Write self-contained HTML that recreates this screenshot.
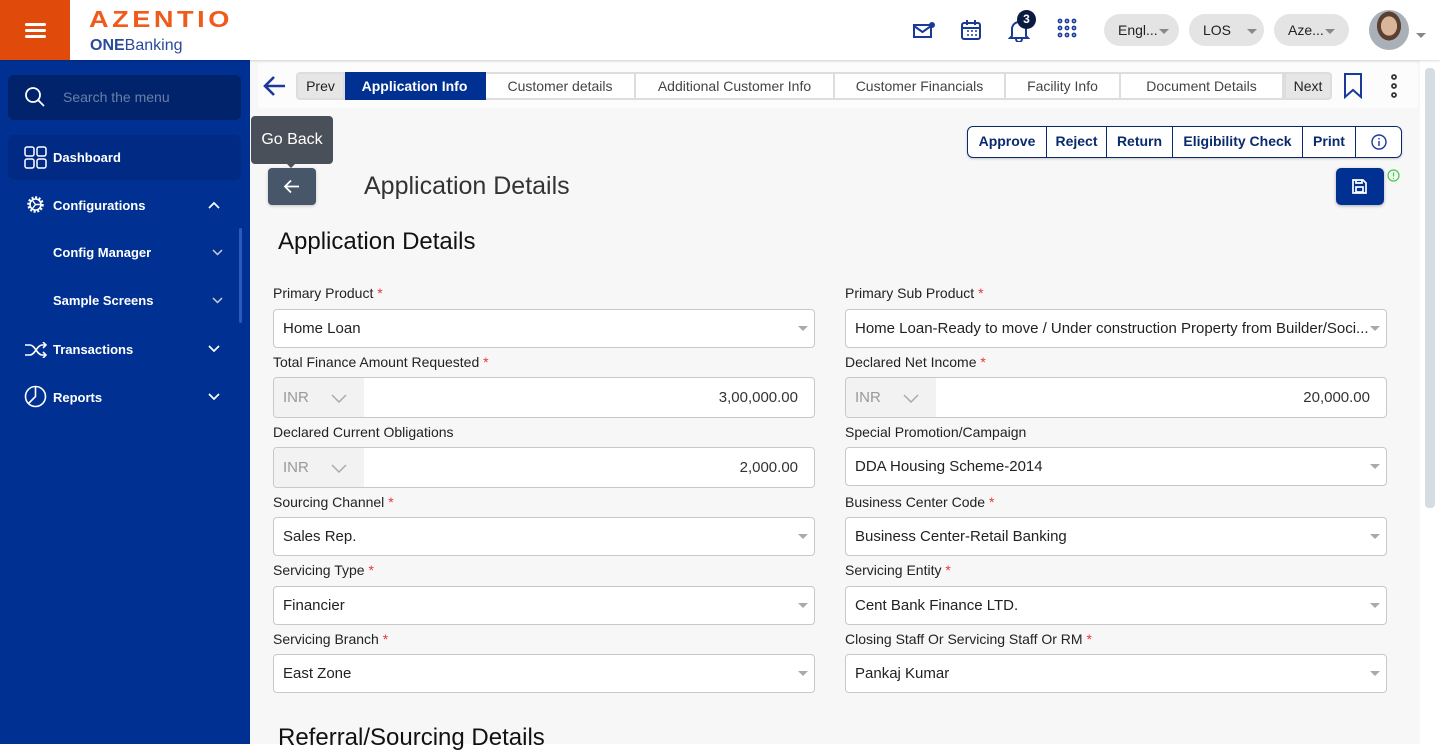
<!DOCTYPE html>
<html><head><meta charset="utf-8"><style>
*{box-sizing:border-box;margin:0;padding:0}
body{width:1440px;height:744px;overflow:hidden;font-family:"Liberation Sans",Arial,sans-serif;background:#fff;position:relative}
.a{position:absolute}
.hdr{left:0;top:0;width:1440px;height:60px;background:#fff;box-shadow:0 1px 2px rgba(0,0,0,.15);z-index:2}
.side{left:0;top:60px;width:250px;height:684px;background:#003192;color:#fff}
.main{left:250px;top:60px;width:1170px;height:684px;background:#f7f7f7}
.nav{font-size:13px;font-weight:bold;color:#fff}
.pill{top:14px;height:32px;border-radius:16px;background:#e4e4e4;font-size:14px;color:#222;line-height:32px;padding-left:14px}
.tri{display:inline-block;width:0;height:0;border-left:5px solid transparent;border-right:5px solid transparent;border-top:5px solid #888;vertical-align:middle}
.tab{top:72px;height:28px;font-size:14px;color:#444;text-align:center;background:#fff;border-right:2px solid #ddd;border-top:2px solid #ddd;border-bottom:2px solid #ddd;line-height:24px}
.lbl{font-size:14px;color:#222}
.lbl b{color:#e53935;font-weight:normal}
.in{height:39px;background:#fff;border:1px solid #c8c8c8;border-radius:4px;font-size:15px;color:#222;line-height:37px;padding-left:9px}
.in .tri{position:absolute;right:6px;top:16px;border-top-color:#aaa}
.cur{position:absolute;left:0;top:0;width:90px;height:100%;background:#f2f2f2;color:#999;padding-left:9px;border-radius:4px 0 0 4px}
.amt{position:absolute;right:16px;top:0;color:#333}
.btn{top:0;height:30px;line-height:28px;font-size:14px;font-weight:bold;color:#0a2a6e;text-align:center;border-right:1px solid #0a2a6e}
</style></head><body>
<div class="a hdr">
 <div class="a" style="left:0;top:0;width:70px;height:60px;background:#e04a0a"></div>
 <div class="a" style="left:25px;top:23px;width:21px;height:3px;background:#fff;border-radius:2px"></div>
 <div class="a" style="left:25px;top:29px;width:21px;height:3px;background:#fff;border-radius:2px"></div>
 <div class="a" style="left:25px;top:35px;width:21px;height:3px;background:#fff;border-radius:2px"></div>
 <div class="a" style="left:89px;top:7px;font-size:23px;font-weight:900;color:#f05a1a;letter-spacing:3px;transform:scaleX(1.18);transform-origin:left;line-height:24px">AZENTIO</div>
 <div class="a" style="left:90px;top:37px;font-size:16px;color:#2a4a9a"><b>ONE</b>Banking</div>
 <svg class="a" style="left:912px;top:20px" width="24" height="20" viewBox="0 0 24 20"><rect x="2" y="5" width="17" height="12" fill="none" stroke="#1a3a9a" stroke-width="2"/><path d="M2 6l8.5 6 8.5-6" fill="none" stroke="#1a3a9a" stroke-width="2"/><circle cx="20" cy="5" r="3" fill="#1a3a9a"/></svg>
 <svg class="a" style="left:960px;top:19px" width="22" height="22" viewBox="0 0 22 22"><rect x="2" y="4" width="18" height="16" rx="2" fill="none" stroke="#1a3a9a" stroke-width="2"/><path d="M2 9h18M7 1v5M15 1v5" stroke="#1a3a9a" stroke-width="2"/><path d="M7 12h2M11 12h2M15 12h2M7 16h2M11 16h2M15 16h2" stroke="#1a3a9a" stroke-width="1.5"/></svg>
 <svg class="a" style="left:1008px;top:18px" width="22" height="24" viewBox="0 0 22 24"><path d="M4 18V11a7 7 0 0 1 14 0v7l2 2H2z M8 21a3 3 0 0 0 6 0" fill="none" stroke="#1a3a9a" stroke-width="2"/></svg>
 <div class="a" style="left:1017px;top:10px;width:19px;height:19px;border-radius:50%;background:#0a1a40;color:#fff;font-size:12px;font-weight:bold;text-align:center;line-height:19px">3</div>
 <svg class="a" style="left:1057px;top:18px" width="20" height="20" viewBox="0 0 20 20" fill="none" stroke="#1a3a9a" stroke-width="1.6"><circle cx="3" cy="3" r="1.6"/><circle cx="10" cy="3" r="1.6"/><circle cx="17" cy="3" r="1.6"/><circle cx="3" cy="10" r="1.6"/><circle cx="10" cy="10" r="1.6"/><circle cx="17" cy="10" r="1.6"/><circle cx="3" cy="17" r="1.6"/><circle cx="10" cy="17" r="1.6"/><circle cx="17" cy="17" r="1.6"/></svg>
 <div class="a pill" style="left:1104px;width:75px">Engl...<span class="tri" style="margin-left:1px"></span></div>
 <div class="a pill" style="left:1189px;width:75px">LOS <span class="tri" style="margin-left:12px"></span></div>
 <div class="a pill" style="left:1274px;width:75px">Aze...<span class="tri" style="margin-left:1px"></span></div>
 <div class="a" style="left:1369px;top:10px;width:40px;height:40px;border-radius:50%;background:radial-gradient(ellipse at 50% 40%,#d9b59a 0 28%,#5a4030 29% 42%,#aab0b8 43%)"></div>
 <div class="a" style="left:1416px;top:27px"><span class="tri" style="border-top-color:#888"></span></div>
</div>
<div class="a side">
 <div class="a" style="left:8px;top:15px;width:233px;height:45px;background:#00236b;border-radius:6px"></div>
 <svg class="a" style="left:24px;top:26px" width="22" height="22" viewBox="0 0 22 22" fill="none" stroke="#fff" stroke-width="1.8"><circle cx="9" cy="9" r="7"/><path d="M14 14l6 6"/></svg>
 <div class="a" style="left:63px;top:29px;font-size:14px;color:#6a7fa8">Search the menu</div>
 <div class="a" style="left:8px;top:75px;width:233px;height:45px;background:#002a84;border-radius:6px"></div>
 <svg class="a" style="left:24px;top:86px" width="23" height="23" viewBox="0 0 23 23" fill="none" stroke="#fff" stroke-width="1.5"><rect x="1" y="1" width="9" height="9" rx="2"/><rect x="13" y="1" width="9" height="9" rx="2"/><rect x="1" y="13" width="9" height="9" rx="2"/><rect x="13" y="13" width="9" height="9" rx="2"/></svg>
 <div class="a nav" style="left:53px;top:90px">Dashboard</div>
 <svg class="a" style="left:25px;top:134px" width="21" height="21" viewBox="0 0 21 21" fill="none" stroke="#fff" stroke-width="2.5"><circle cx="10.5" cy="10.5" r="7" stroke-dasharray="2 1.6"/><circle cx="10.5" cy="10.5" r="5.5" stroke-width="1.6"/><path d="M10.5 10.5l-3-4M10.5 10.5l5 0M10.5 10.5l-3 4" stroke-width="1.4"/></svg>
 <div class="a nav" style="left:53px;top:138px">Configurations</div>
 <svg class="a" style="left:208px;top:141px" width="12" height="8"><path d="M1 7l5-5 5 5" fill="none" stroke="#fff" stroke-width="1.7"/></svg>
 <div class="a nav" style="left:53px;top:185px">Config Manager</div>
 <div class="a nav" style="left:53px;top:233px">Sample Screens</div>
 <svg class="a" style="left:212px;top:189px" width="11" height="7"><path d="M1 1l4.5 4.5L10 1" fill="none" stroke="#ccd" stroke-width="1.5"/></svg>
 <svg class="a" style="left:212px;top:237px" width="11" height="7"><path d="M1 1l4.5 4.5L10 1" fill="none" stroke="#ccd" stroke-width="1.5"/></svg>
 <div class="a" style="left:239px;top:168px;width:3px;height:95px;background:#2a5ac0;border-radius:2px"></div>
 <svg class="a" style="left:25px;top:282px" width="22" height="16" viewBox="0 0 22 16" fill="none" stroke="#fff" stroke-width="1.6"><path d="M0 3h5c5 0 7 10 12 10h4M0 13h5c5 0 7-10 12-10h4M18 0l3 3-3 3M18 10l3 3-3 3"/></svg>
 <div class="a nav" style="left:53px;top:282px">Transactions</div>
 <svg class="a" style="left:208px;top:285px" width="12" height="8"><path d="M1 1l5 5 5-5" fill="none" stroke="#fff" stroke-width="1.7"/></svg>
 <svg class="a" style="left:24px;top:325px" width="23" height="23" viewBox="0 0 23 23" fill="none" stroke="#fff" stroke-width="1.6"><circle cx="11.5" cy="11.5" r="10"/><path d="M11.5 1.5v10l-7 7"/></svg>
 <div class="a nav" style="left:53px;top:330px">Reports</div>
 <svg class="a" style="left:208px;top:333px" width="12" height="8"><path d="M1 1l5 5 5-5" fill="none" stroke="#fff" stroke-width="1.7"/></svg>
</div>
<div class="a main"></div>
<div class="a" style="left:1425px;top:68px;width:10px;height:440px;background:#d5dde2;border-radius:4px"></div>
<div class="a" style="left:258px;top:63px;width:1160px;height:45px;background:#fcfcfc;border-radius:4px"></div>
<svg class="a" style="left:263px;top:75px" width="24" height="22" viewBox="0 0 24 22" fill="none" stroke="#1a3a9a" stroke-width="2.6"><path d="M22 11H3M11 2l-9 9 9 9"/></svg>
<div class="a tab" style="left:296px;width:49px;background:#e6e6e6;color:#222;border:2px solid #ddd;border-radius:4px 0 0 4px">Prev</div>
<div class="a tab" style="left:345px;width:141px;background:#003192;color:#fff;font-weight:bold;border-color:#003192">Application Info</div>
<div class="a tab" style="left:486px;width:150px">Customer details</div>
<div class="a tab" style="left:636px;width:199px">Additional Customer Info</div>
<div class="a tab" style="left:835px;width:171px">Customer Financials</div>
<div class="a tab" style="left:1006px;width:115px">Facility Info</div>
<div class="a tab" style="left:1121px;width:163px">Document Details</div>
<div class="a tab" style="left:1284px;width:48px;background:#e6e6e6;color:#222;border:2px solid #ddd;border-radius:0 4px 4px 0">Next</div>
<svg class="a" style="left:1343px;top:73px" width="20" height="26" viewBox="0 0 20 26"><path d="M2 1h16v23l-8-7-8 7z" fill="none" stroke="#1a3a9a" stroke-width="2"/></svg>
<svg class="a" style="left:1390px;top:74px" width="8" height="24" fill="none" stroke="#333" stroke-width="1.8"><circle cx="4" cy="3" r="2"/><circle cx="4" cy="12" r="2"/><circle cx="4" cy="21" r="2"/></svg>
<div class="a" style="left:251px;top:116px;width:82px;height:48px;background:#4a5059;border-radius:4px;color:#fff;font-size:16px;text-align:center;line-height:48px">Go Back</div>
<div class="a" style="left:286px;top:163px;width:0;height:0;border-left:5px solid transparent;border-right:5px solid transparent;border-top:5px solid #4a5059"></div>
<div class="a" style="left:268px;top:168px;width:48px;height:37px;background:#48566a;border-radius:4px;box-shadow:0 1px 3px rgba(0,0,0,.2)"></div>
<svg class="a" style="left:283px;top:179px" width="17" height="15" fill="none" stroke="#fff" stroke-width="1.8"><path d="M16 7.5H2M8 1.5l-6 6 6 6"/></svg>
<div class="a" style="left:364px;top:172px;font-size:25px;color:#333">Application Details</div>
<div class="a" style="left:967px;top:126px;width:435px;height:32px;border:1px solid #0a2a6e;border-radius:6px;background:#fff;box-shadow:0 1px 2px rgba(0,0,0,.2)">
 <div class="a btn" style="left:0;width:79px">Approve</div>
 <div class="a btn" style="left:79px;width:60px">Reject</div>
 <div class="a btn" style="left:139px;width:66px">Return</div>
 <div class="a btn" style="left:205px;width:130px">Eligibility Check</div>
 <div class="a btn" style="left:335px;width:53px">Print</div>
 <svg class="a" style="left:403px;top:7px" width="16" height="16" fill="none" stroke="#1a3a9a" stroke-width="1.4"><circle cx="8" cy="8" r="7"/><path d="M8 7v5M8 4v1.5"/></svg>
</div>
<div class="a" style="left:1336px;top:168px;width:48px;height:37px;background:#003192;border-radius:5px;box-shadow:0 1px 3px rgba(0,0,0,.3)"></div>
<svg class="a" style="left:1352px;top:179px" width="15" height="15" fill="none" stroke="#fff" stroke-width="1.7"><path d="M1 1h10l3 3v10H1z"/><rect x="4" y="8" width="7" height="5"/><path d="M4 1v3h6V1"/></svg>
<svg class="a" style="left:1387px;top:169px" width="13" height="13" fill="none" stroke="#4c4" stroke-width="1.2"><circle cx="6.5" cy="6.5" r="5.5"/><path d="M6.5 3.5v4M6.5 9v1"/></svg>
<div class="a" style="left:278px;top:228px;font-size:24px;color:#111">Application Details</div>

<div class="a lbl" style="left:273px;top:285px">Primary Product <b>*</b></div>
<div class="a in" style="left:273px;top:309px;width:542px">Home Loan<span class="tri"></span></div>
<div class="a lbl" style="left:845px;top:285px">Primary Sub Product <b>*</b></div>
<div class="a in" style="left:845px;top:309px;width:542px">Home Loan-Ready to move / Under construction Property from Builder/Soci...<span class="tri"></span></div>

<div class="a lbl" style="left:273px;top:354px">Total Finance Amount Requested <b>*</b></div>
<div class="a in" style="left:273px;top:377px;width:542px;height:41px;line-height:39px"><div class="cur">INR <svg style="margin-left:18px;vertical-align:middle" width="16" height="9"><path d="M1 1l7 7 7-7" fill="none" stroke="#aaa" stroke-width="1.5"/></svg></div><span class="amt">3,00,000.00</span></div>
<div class="a lbl" style="left:845px;top:354px">Declared Net Income <b>*</b></div>
<div class="a in" style="left:845px;top:377px;width:542px;height:41px;line-height:39px"><div class="cur">INR <svg style="margin-left:18px;vertical-align:middle" width="16" height="9"><path d="M1 1l7 7 7-7" fill="none" stroke="#aaa" stroke-width="1.5"/></svg></div><span class="amt">20,000.00</span></div>

<div class="a lbl" style="left:273px;top:424px">Declared Current Obligations</div>
<div class="a in" style="left:273px;top:447px;width:542px;height:41px;line-height:39px"><div class="cur">INR <svg style="margin-left:18px;vertical-align:middle" width="16" height="9"><path d="M1 1l7 7 7-7" fill="none" stroke="#aaa" stroke-width="1.5"/></svg></div><span class="amt">2,000.00</span></div>
<div class="a lbl" style="left:845px;top:424px">Special Promotion/Campaign</div>
<div class="a in" style="left:845px;top:447px;width:542px">DDA Housing Scheme-2014<span class="tri"></span></div>

<div class="a lbl" style="left:273px;top:494px">Sourcing Channel <b>*</b></div>
<div class="a in" style="left:273px;top:517px;width:542px">Sales Rep.<span class="tri"></span></div>
<div class="a lbl" style="left:845px;top:494px">Business Center Code <b>*</b></div>
<div class="a in" style="left:845px;top:517px;width:542px">Business Center-Retail Banking<span class="tri"></span></div>

<div class="a lbl" style="left:273px;top:562px">Servicing Type <b>*</b></div>
<div class="a in" style="left:273px;top:586px;width:542px">Financier<span class="tri"></span></div>
<div class="a lbl" style="left:845px;top:562px">Servicing Entity <b>*</b></div>
<div class="a in" style="left:845px;top:586px;width:542px">Cent Bank Finance LTD.<span class="tri"></span></div>

<div class="a lbl" style="left:273px;top:631px">Servicing Branch <b>*</b></div>
<div class="a in" style="left:273px;top:654px;width:542px">East Zone<span class="tri"></span></div>
<div class="a lbl" style="left:845px;top:631px">Closing Staff Or Servicing Staff Or RM <b>*</b></div>
<div class="a in" style="left:845px;top:654px;width:542px">Pankaj Kumar<span class="tri"></span></div>

<div class="a" style="left:278px;top:724px;font-size:24px;color:#111">Referral/Sourcing Details</div>
</body></html>
